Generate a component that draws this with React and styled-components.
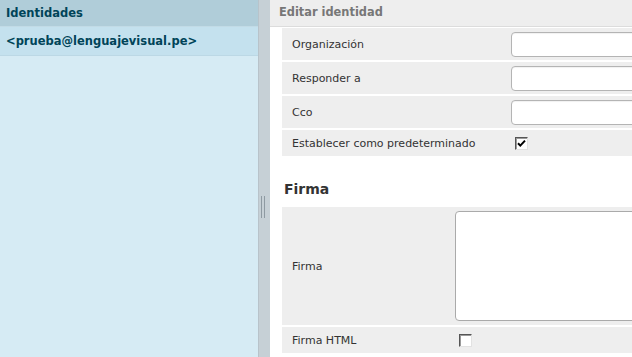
import React from "react";
import styled, { createGlobalStyle } from "styled-components";

const Global = createGlobalStyle`
  html, body { margin: 0; padding: 0; background: #fff; }
  body { font-family: "DejaVu Sans", Verdana, sans-serif; font-size: 11px; color: #333; }
  * { box-sizing: border-box; }
`;

const Page = styled.div`
  display: flex;
  width: 632px;
  height: 357px;
  overflow: hidden;
`;

const Sidebar = styled.div`
  width: 258px;
  flex: none;
  background: #d6ebf4;
  display: flex;
  flex-direction: column;
`;

const SideHeader = styled.div`
  height: 27px;
  background: #b0cdd9;
  color: #004458;
  font-weight: bold;
  font-size: 11.5px;
  line-height: 26px;
  padding-left: 6px;
  border-bottom: 1px solid #c2dbe6;
`;

const IdentityRow = styled.div`
  height: 29px;
  background: ${(p) => (p.$selected ? "#c4e1ee" : "transparent")};
  border-bottom: 1px solid #bcd8e5;
  color: #004458;
  font-weight: bold;
  font-size: 11.5px;
  line-height: 28px;
  padding-left: 6px;
`;

const Splitter = styled.div`
  width: 12px;
  flex: none;
  background: #c6d0d6;
  border-left: 1px solid #b8c3ca;
  display: flex;
  align-items: center;
  justify-content: center;
  gap: 2px;
  padding-right: 3px;
`;

const Grip = styled.span`
  width: 1px;
  height: 22px;
  background: #8e9aa2;
  margin-top: 56px;
`;

const Main = styled.div`
  flex: 1;
  min-width: 0;
  background: #fff;
  display: flex;
  flex-direction: column;
`;

const MainHeader = styled.div`
  height: 27px;
  background: #eeeeee;
  border-bottom: 1px solid #dcdcdc;
  color: #777;
  font-weight: bold;
  font-size: 11.4px;
  line-height: 25px;
  padding-left: 9px;
  white-space: nowrap;
`;

const Content = styled.div`
  padding: 1px 0 0 12px;
  display: flex;
  flex-direction: column;
`;

const Rows = styled.div`
  display: flex;
  flex-direction: column;
  gap: 2px;
`;

const Row = styled.div`
  display: flex;
  align-items: center;
  background: #eeeeee;
  height: ${(p) => p.$h}px;
`;

const Label = styled.div`
  width: ${(p) => p.$w}px;
  flex: none;
  padding-left: 10px;
  white-space: nowrap;
  color: #333;
`;

const Value = styled.div`
  flex: 1;
  padding-left: 4px;
  display: flex;
  align-items: center;
  min-width: 0;
`;

const TextInput = styled.div`
  width: 300px;
  height: 25px;
  flex: none;
  background: #fff;
  border: 1px solid #b4b4b4;
  border-radius: 4px;
  box-shadow: inset 0 1px 1px rgba(0,0,0,0.06);
`;

const TextArea = styled.div`
  width: 300px;
  height: 110px;
  flex: none;
  background: #fff;
  border: 1px solid #aaaaaa;
  border-radius: 4px;
`;

const Check = styled.span`
  width: 13px;
  height: 13px;
  margin-left: 4px;
  background: #fff;
  border-top: 1px solid #555;
  border-left: 1px solid #555;
  border-right: 1px solid #e2e2e2;
  border-bottom: 1px solid #e2e2e2;
  box-shadow: inset 1px 1px 0 #9a9a9a;
  display: inline-flex;
  align-items: center;
  justify-content: center;
`;

const SectionTitle = styled.div`
  font-size: 14px;
  font-weight: bold;
  color: #333;
  line-height: 18px;
  padding: 24px 0 9px 2px;
`;

function Checkbox({ checked }) {
  return (
    <Check>
      {checked && (
        <svg width="9" height="9" viewBox="0 0 9 9">
          <path d="M1 4.2 L3.3 6.6 L8 1.6" stroke="#000" strokeWidth="2" fill="none" />
        </svg>
      )}
    </Check>
  );
}

export default function App() {
  return (
    <>
      <Global />
      <Page>
        <Sidebar>
          <SideHeader>Identidades</SideHeader>
          <IdentityRow $selected>&lt;prueba@lenguajevisual.pe&gt;</IdentityRow>
        </Sidebar>
        <Splitter>
          <Grip />
          <Grip />
        </Splitter>
        <Main>
          <MainHeader>Editar identidad</MainHeader>
          <Content>
            <Rows>
              <Row $h={32}>
                <Label $w={225}>Organización</Label>
                <Value><TextInput /></Value>
              </Row>
              <Row $h={32}>
                <Label $w={225}>Responder a</Label>
                <Value><TextInput /></Value>
              </Row>
              <Row $h={32}>
                <Label $w={225}>Cco</Label>
                <Value><TextInput /></Value>
              </Row>
              <Row $h={26}>
                <Label $w={225}>Establecer como predeterminado</Label>
                <Value><Checkbox checked /></Value>
              </Row>
            </Rows>
            <SectionTitle>Firma</SectionTitle>
            <Rows>
              <Row $h={118}>
                <Label $w={169}>Firma</Label>
                <Value><TextArea /></Value>
              </Row>
              <Row $h={26}>
                <Label $w={169}>Firma HTML</Label>
                <Value><Checkbox /></Value>
              </Row>
            </Rows>
          </Content>
        </Main>
      </Page>
    </>
  );
}
